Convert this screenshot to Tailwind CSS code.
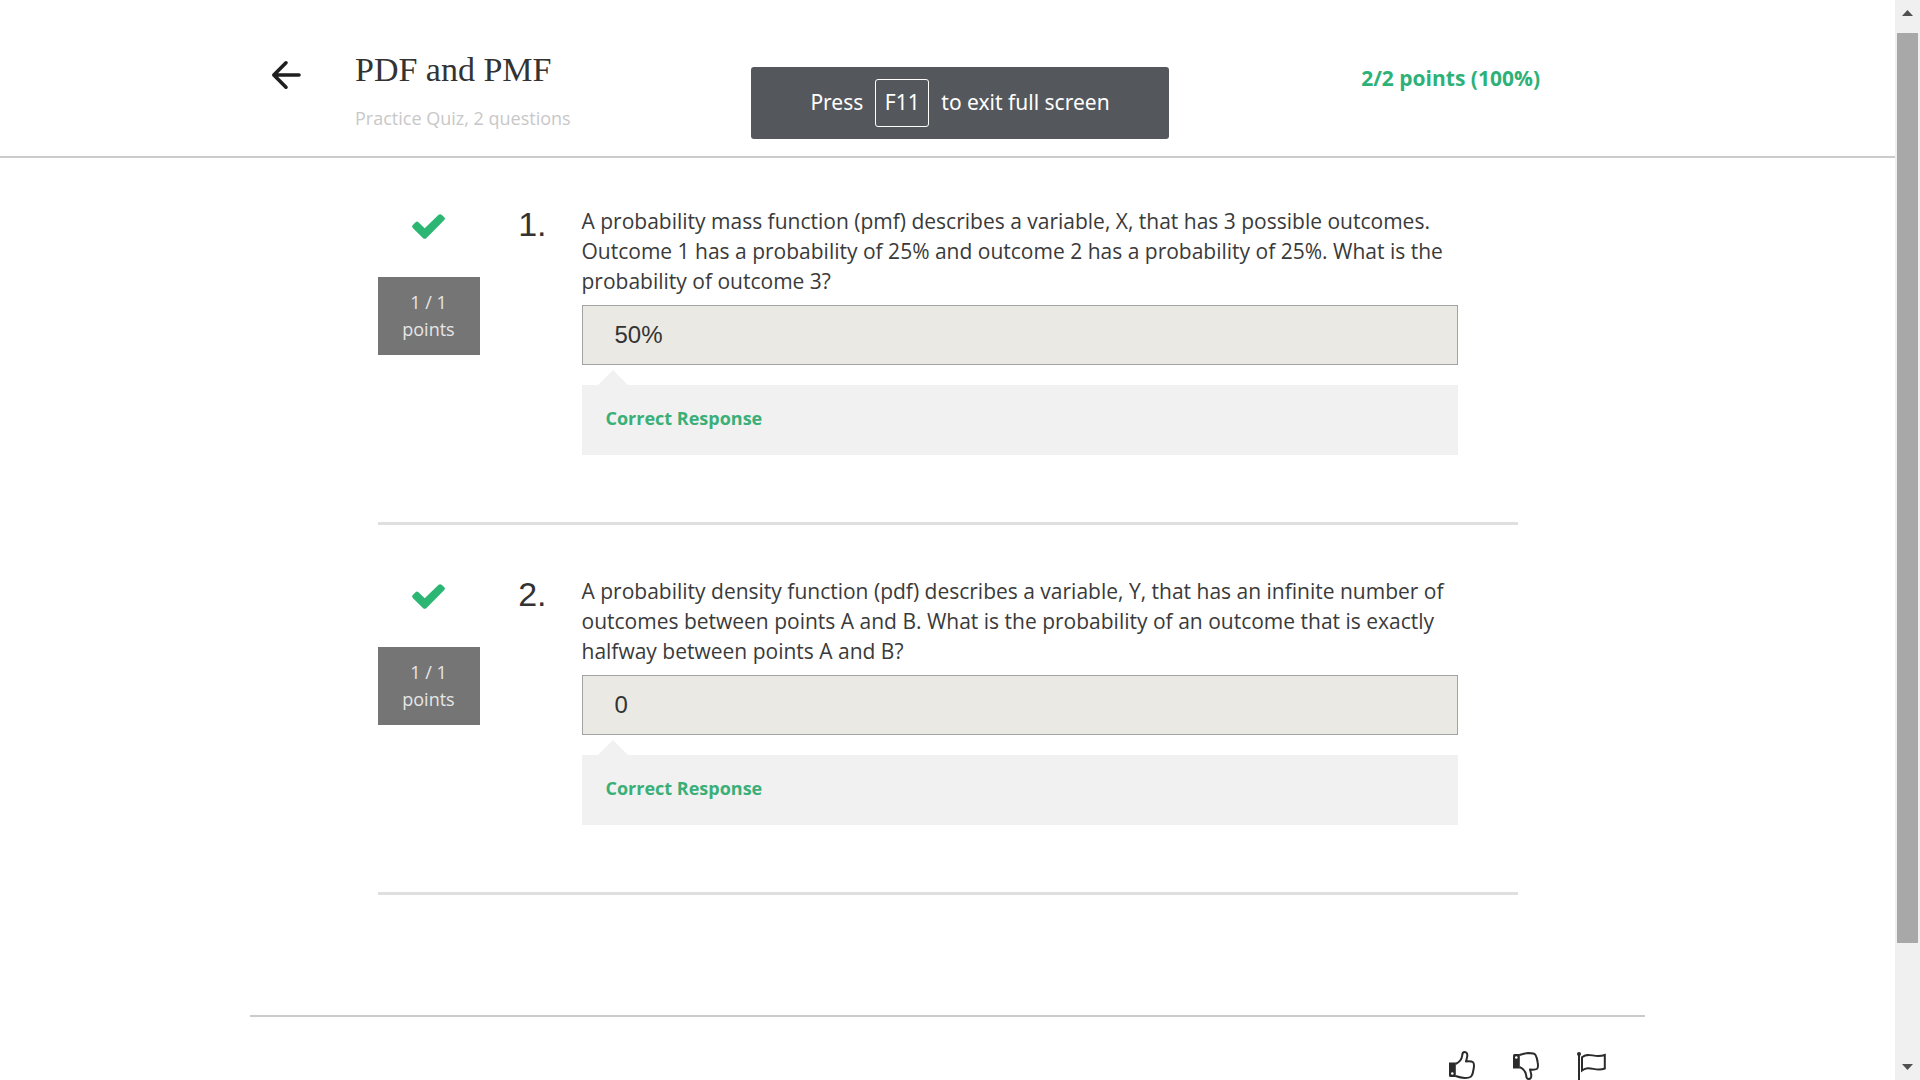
<!DOCTYPE html>
<html lang="en">
<head>
<meta charset="utf-8">
<meta name="viewport" content="width=device-width, initial-scale=1">
<title>PDF and PMF</title>
<script src="https://cdn.jsdelivr.net/npm/@tailwindcss/browser@4"></script>
</head>
<body class="flex h-screen overflow-hidden bg-white font-['Open_Sans',sans-serif] text-[#333]">

<div class="h-full min-w-0 flex-1 overflow-hidden">
  <header class="flex justify-center border-b-2 border-[#cbcbcb]">
    <div class="flex h-[156px] w-full max-w-[1395px] items-start pl-[21px] pr-[105px]">
      <a href="#" aria-label="Back" class="mt-[60px] block text-[#1f1f1f]">
        <svg class="h-[30px] w-[30px]" viewBox="0 0 30 30" fill="none" stroke="currentColor" stroke-width="3.6" stroke-linecap="round" stroke-linejoin="round"><path d="M28 15H3M15 2.800L2.800 15L15 27.200"/></svg>
      </a>
      <div class="ml-[54px] mt-[50px] flex-1">
        <h1 class="font-['Liberation_Serif',serif] text-[34px] leading-[40px]">PDF and PMF</h1>
        <p class="mt-[14px] text-[18px] leading-[28px] text-[#c8c8c8]">Practice Quiz, 2 questions</p>
      </div>
      <p class="mt-[62px] text-[21px] font-bold leading-[32px] text-[#2eb177]">2/2 points (100%)</p>
    </div>
  </header>

  <main class="mx-auto w-full max-w-[1140px]">
    <section class="flex h-[367px] items-start border-b-[3px] border-[#dfdfdf] pt-[47px]">
      <div class="w-[102px] shrink-0 text-center">
        <svg class="mx-auto mt-[9px] h-[25px] w-[33px] text-[#2bb673]" viewBox="0 0 33 25" fill="currentColor" role="img" aria-label="Correct"><path d="M32.300 5.900L14.500 23.900Q12.700 25.600 10.900 23.900L.8 13.900Q-.6 12.300.8 10.900L3.500 8.200Q5 6.900 6.500 8.200L12.700 14.300L26.600.8Q28.100-.5 29.600.8L32.300 3.300Q33.500 4.600 32.300 5.900Z"/></svg>
        <p class="mt-[38px] bg-[#757575] py-3 text-[18px] leading-[27px] text-[#e6e6e6]">1 / 1<br>points</p>
      </div>
      <p class="w-[67px] shrink-0 text-right font-['Liberation_Sans',sans-serif] text-[34px] leading-[38px]">1.</p>
      <div class="ml-[35px] w-[876px] min-w-0">
        <label for="q1" class="block pt-px text-[21px] leading-[30px] text-[#3a3a3a]">A probability mass function (pmf) describes a variable, X, that has 3 possible outcomes. Outcome 1 has a probability of 25% and outcome 2 has a probability of 25%. What is the probability of outcome 3?</label>
        <input id="q1" type="text" readonly value="50%" class="mt-[9px] block h-[60px] w-full border border-[#a3a3a3] bg-[#eae9e4] px-8 font-['Liberation_Sans',sans-serif] text-[24px] outline-none">
        <svg class="ml-4 mt-[5px] block h-[15px] w-[30px]" viewBox="0 0 30 15" fill="#f1f1f1"><path d="M15 0L30 15H0Z"/></svg>
        <p class="h-[70px] bg-[#f1f1f1] px-6 pt-5 text-[18px] font-bold leading-[27px] text-[#3aaf78]">Correct Response</p>
      </div>
    </section>

    <section class="flex h-[370px] items-start border-b-[3px] border-[#dfdfdf] pt-[50px]">
      <div class="w-[102px] shrink-0 text-center">
        <svg class="mx-auto mt-[9px] h-[25px] w-[33px] text-[#2bb673]" viewBox="0 0 33 25" fill="currentColor" role="img" aria-label="Correct"><path d="M32.300 5.900L14.500 23.900Q12.700 25.600 10.900 23.900L.8 13.900Q-.6 12.300.8 10.900L3.500 8.200Q5 6.900 6.500 8.200L12.700 14.300L26.600.8Q28.100-.5 29.600.8L32.300 3.300Q33.500 4.600 32.300 5.900Z"/></svg>
        <p class="mt-[38px] bg-[#757575] py-3 text-[18px] leading-[27px] text-[#e6e6e6]">1 / 1<br>points</p>
      </div>
      <p class="w-[67px] shrink-0 text-right font-['Liberation_Sans',sans-serif] text-[34px] leading-[38px]">2.</p>
      <div class="ml-[35px] w-[876px] min-w-0">
        <label for="q2" class="block pt-px text-[21px] leading-[30px] text-[#3a3a3a]">A probability density function (pdf) describes a variable, Y, that has an infinite number of outcomes between points A and B. What is the probability of an outcome that is exactly halfway between points A and B?</label>
        <input id="q2" type="text" readonly value="0" class="mt-[9px] block h-[60px] w-full border border-[#a3a3a3] bg-[#eae9e4] px-8 font-['Liberation_Sans',sans-serif] text-[24px] outline-none">
        <svg class="ml-4 mt-[5px] block h-[15px] w-[30px]" viewBox="0 0 30 15" fill="#f1f1f1"><path d="M15 0L30 15H0Z"/></svg>
        <p class="h-[70px] bg-[#f1f1f1] px-6 pt-5 text-[18px] font-bold leading-[27px] text-[#3aaf78]">Correct Response</p>
      </div>
    </section>
  </main>

  <footer class="mx-auto mt-[120px] flex w-full max-w-[1395px] justify-end gap-[38px] border-t-2 border-[#c9cccb] pr-[39px] pt-[33px] text-[#2b2b2b]">
    <button type="button" aria-label="Like"><svg class="h-7 w-[26px]" viewBox="0 0 26 28" fill="none" stroke="currentColor" stroke-width="2" stroke-linejoin="round"><path d="M6.500 13C10 11.500 12.800 8 13.200 4.500C13.300 2 14 1 15.600 1C17.800 1 18.600 3 18.200 5.500C18 7.500 17.300 9 17 10.500C19.500 10.300 22.500 10.200 23.800 11C25.200 12 25.300 14 24.700 17.500C24.200 21 23.500 23.500 22.500 25C21.200 27 18.500 27 15.500 27C12 26.800 9.500 26 6.500 25"/><path fill="currentColor" stroke="none" d="M0 11.500H6.800V26H1.500Q0 26 0 24.500Z"/><circle cx="3.300" cy="22.500" r="1.300" fill="#fff" stroke="none"/></svg></button>
    <button type="button" aria-label="Dislike"><svg class="mt-[2px] h-7 w-[26px]" viewBox="0 0 26 28" fill="none" stroke="currentColor" stroke-width="2" stroke-linejoin="round"><path d="M6.500 15C10 16.500 12.800 20 13.200 23.500C13.300 26 14 27 15.600 27C17.800 27 18.600 25 18.200 22.500C18 20.500 17.300 19 17 17.500C19.500 17.700 22.500 17.800 23.800 17C25.200 16 25.300 14 24.700 10.500C24.200 7 23.500 4.500 22.500 3C21.200 1 18.500 1 15.500 1C12 1.200 9.500 2 6.500 3"/><path fill="currentColor" stroke="none" d="M0 16.500H6.800V2H1.500Q0 2 0 3.500Z"/><circle cx="3.300" cy="5.500" r="1.300" fill="#fff" stroke="none"/></svg></button>
    <button type="button" aria-label="Report"><svg class="mt-[2px] h-7 w-[29px]" viewBox="0 0 29 28" fill="none" stroke="currentColor" stroke-width="2"><circle cx="2" cy="2" r="2" fill="currentColor" stroke="none"/><path d="M2 2V28M5 5.200C12-.5 17 6.500 27.800 3V16.500C18 20.500 13 12.500 5 18.500Z"/></svg></button>
  </footer>
</div>

<div aria-hidden="true" class="flex h-full w-[25px] shrink-0 flex-col items-center bg-[#f0f0f0]">
  <svg class="h-[33px] w-[11px] shrink-0" viewBox="0 0 11 33" fill="#505050"><path d="M0 16L5.500 10L11 16Z"/></svg>
  <div class="w-[21px] flex-1 bg-[#a8a8a8]"></div>
  <svg class="h-[137px] w-[11px] shrink-0" viewBox="0 0 11 137" fill="#505050"><path d="M0 121L5.500 127L11 121Z"/></svg>
</div>

<div role="status" class="absolute left-1/2 top-[67px] flex h-[72px] w-[418px] -translate-x-1/2 items-center justify-center gap-3 rounded-[3px] bg-[#54575c] font-['Noto_Sans',sans-serif] text-[21px] text-white">
  <span>Press</span>
  <kbd class="flex h-12 w-[54px] items-center justify-center rounded-[3px] border border-white font-['Noto_Sans',sans-serif] text-[21px]">F11</kbd>
  <span>to exit full screen</span>
</div>
</body>
</html>
